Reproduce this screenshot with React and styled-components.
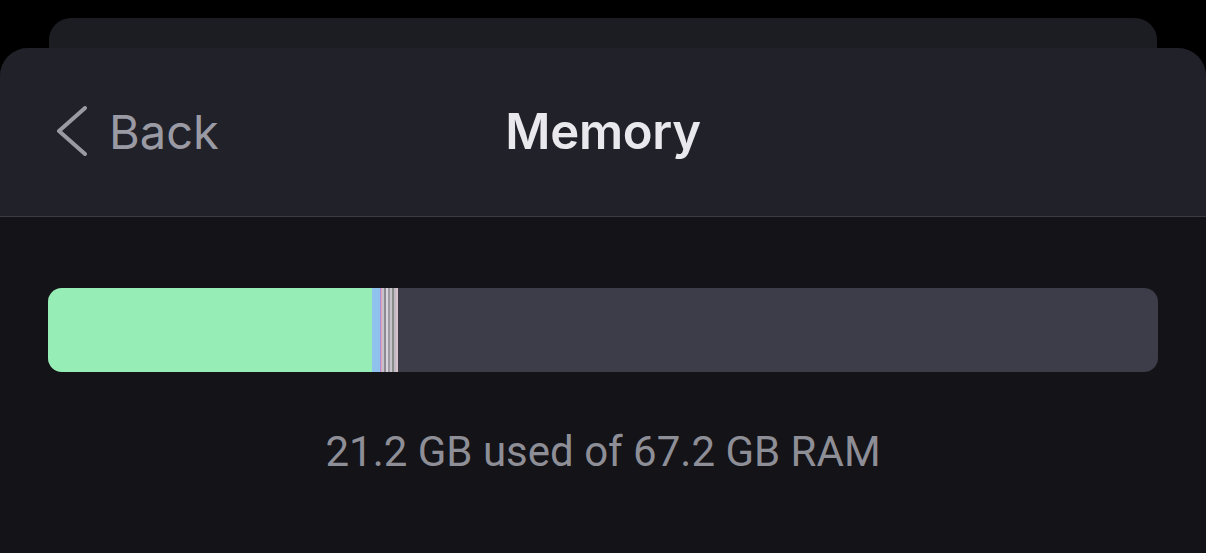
import React from "react";
import styled, { createGlobalStyle } from "styled-components";

const GlobalStyle = createGlobalStyle`
  html, body {
    margin: 0;
    padding: 0;
    background: #000000;
    overflow: hidden;
  }
  body {
    font-family: "Inter", "Roboto", sans-serif;
    -webkit-font-smoothing: antialiased;
  }
`;

const Page = styled.div`
  width: 1206px;
  height: 553px;
  background: #000000;
  padding-top: 18px;
  box-sizing: border-box;
  display: flex;
  flex-direction: column;
`;

const BackSheet = styled.div`
  height: 30px;
  margin: 0 49px 0 49px;
  background: #1c1d22;
  border-radius: 22px 22px 0 0;
`;

const Sheet = styled.div`
  flex: 1;
  display: flex;
  flex-direction: column;
  border-radius: 28px 28px 0 0;
  overflow: hidden;
  background: #131318;
`;

const Header = styled.div`
  height: 168px;
  background: #202129;
  border-bottom: 1px solid #3b3c43;
  display: grid;
  grid-template-columns: 1fr auto 1fr;
  align-items: center;
  padding: 0 0 0 55px;
`;

const BackButton = styled.div`
  display: flex;
  align-items: center;
  gap: 20px;
  color: #9a9aa4;
  font-family: "Inter", sans-serif;
  font-size: 47px;
  font-weight: 400;
  margin-top: -2px;
`;

const Title = styled.div`
  color: #e8e8ed;
  font-family: "Inter", sans-serif;
  font-size: 49px;
  font-weight: 600;
  letter-spacing: -0.3px;
  margin-top: -2px;
  margin-right: 55px;
`;

const Content = styled.div`
  padding: 71px 48px 0 48px;
  display: flex;
  flex-direction: column;
  align-items: center;
`;

const Bar = styled.div`
  width: 100%;
  height: 84px;
  border-radius: 14px;
  overflow: hidden;
  background: #3c3d48;
  display: flex;
`;

const Segment = styled.div`
  height: 100%;
  flex: none;
  background: ${(p) => p.$color};
`;

const Caption = styled.div`
  margin-top: 55px;
  color: #8e8e97;
  font-family: "Roboto", sans-serif;
  font-size: 42px;
  font-weight: 400;
`;

const segments = [
  { w: 324, c: "#96eeb6" },
  { w: 8, c: "#8fc3ee" },
  { w: 1, c: "#a88fd8" },
  { w: 1, c: "#e4a0b6" },
  { w: 2, c: "#c6c2cc" },
  { w: 2, c: "#8d8a96" },
  { w: 2, c: "#d8d6dc" },
  { w: 2, c: "#9e9aa6" },
  { w: 2, c: "#c8c4cc" },
  { w: 2, c: "#8a8e8a" },
  { w: 2, c: "#bfbac4" },
  { w: 2, c: "#d6c2c8" },
];

const Chevron = () => (
  <svg width="34" height="50" viewBox="0 0 34 50" fill="none">
    <path
      d="M30 2 L4 25 L30 48"
      stroke="#9a9aa4"
      strokeWidth="4"
      strokeLinecap="round"
      strokeLinejoin="round"
    />
  </svg>
);

export default function App() {
  return (
    <>
      <GlobalStyle />
      <Page>
        <BackSheet />
        <Sheet>
          <Header>
            <BackButton>
              <Chevron />
              <span>Back</span>
            </BackButton>
            <Title>Memory</Title>
            <div />
          </Header>
          <Content>
            <Bar>
              {segments.map((s, i) => (
                <Segment key={i} $color={s.c} style={{ width: s.w }} />
              ))}
            </Bar>
            <Caption>21.2 GB used of 67.2 GB RAM</Caption>
          </Content>
        </Sheet>
      </Page>
    </>
  );
}
